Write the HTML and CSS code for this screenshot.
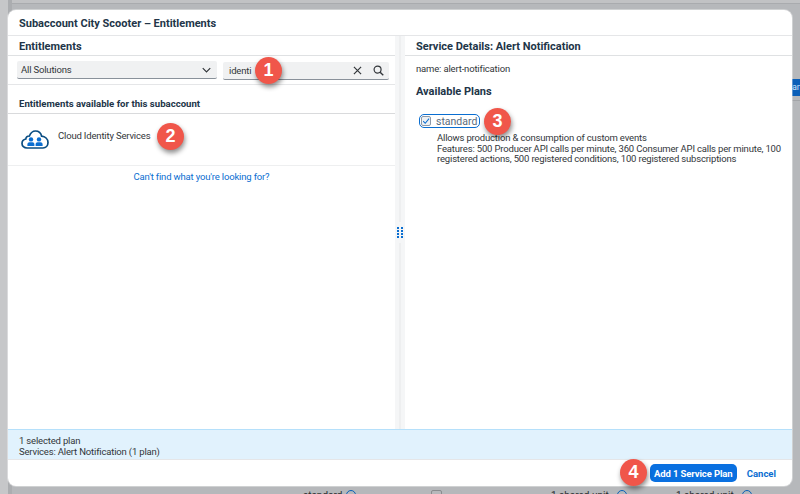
FILE: index.html
```html
<!DOCTYPE html>
<html>
<head>
    <title>Subaccount City Scooter - Entitlements</title>
    <link rel="stylesheet" href="styles.css">
</head>
<body>
    <!-- page behind the dialog -->
    <div class="backdrop-top"></div>
    <div class="backdrop-side"></div>
    <div class="backdrop-line"></div>
    <div class="backdrop-tab">an</div>
    <div class="backdrop-row">
        <span class="row-text row-standard">standard</span>
        <span class="info-dot info-a"></span>
        <span class="row-box"></span>
        <span class="row-text row-unit-a">1 shared unit</span>
        <span class="info-dot info-b"></span>
        <span class="row-text row-unit-b">1 shared unit</span>
        <span class="info-dot info-c"></span>
    </div>

    <div class="dialog">
        <header class="dialog-title">Subaccount City Scooter – Entitlements</header>

        <div class="panes">
            <section class="pane-left">
                <h2 class="pane-heading">Entitlements</h2>
                <div class="filters">
                    <div class="select">
                        <span>All Solutions</span>
                        <svg class="chevron" viewBox="0 0 12 8" width="9" height="6">
                            <path d="M1 1.5 L6 6.5 L11 1.5" fill="none" stroke="#32363a" stroke-width="1.6"/>
                        </svg>
                    </div>
                    <div class="search">
                        <span class="search-value">identi</span>
                        <svg viewBox="0 0 10 10" width="9" height="9">
                            <path d="M1 1 L9 9 M9 1 L1 9" fill="none" stroke="#32363a" stroke-width="1.3"/>
                        </svg>
                        <svg viewBox="0 0 12 12" width="11" height="11">
                            <circle cx="5" cy="5" r="3.8" fill="none" stroke="#32363a" stroke-width="1.3"/>
                            <path d="M7.8 7.8 L11.2 11.2" stroke="#32363a" stroke-width="1.5"/>
                        </svg>
                    </div>
                </div>
                <h3 class="list-heading">Entitlements available for this subaccount</h3>
                <div class="list-item">
                    <svg class="cloud" viewBox="0 0 28 19" width="28" height="19">
                        <path d="M6 18 C3 18 1 16 1 13.4 C1 11 2.6 9.4 4.8 9 C5 7 6.6 5.8 8.4 6 C9.6 3 11.6 1 14.4 1 C17.6 1 20 3.2 20.6 6.2 C24 6.6 27 9 27 12.6 C27 15.8 24.8 18 22 18 Z" fill="#fff" stroke="#0a4d82" stroke-width="1.7"/>
                        <circle cx="10" cy="9.4" r="2.2" fill="#0a6ed1"/>
                        <path d="M6.4 16 V14 C6.4 12.6 8 12.2 10 12.2 C12 12.2 13.4 12.6 13.4 14 V16 Z" fill="#0a6ed1"/>
                        <circle cx="18" cy="9.4" r="2.2" fill="#0a6ed1"/>
                        <path d="M14.6 16 V14 C14.6 12.6 16 12.2 18 12.2 C20 12.2 21.6 12.6 21.6 14 V16 Z" fill="#0a6ed1"/>
                    </svg>
                    <span class="item-name">Cloud Identity Services</span>
                </div>
                <a class="help-link">Can't find what you're looking for?</a>
            </section>

            <div class="splitter">
                <span class="splitter-bar"></span>
                <svg class="grip" viewBox="0 0 6 11" width="6" height="11">
                    <g fill="#0a6ed1">
                        <rect x="0" y="0" width="2" height="2"/><rect x="4" y="0" width="2" height="2"/>
                        <rect x="0" y="3" width="2" height="2"/><rect x="4" y="3" width="2" height="2"/>
                        <rect x="0" y="6" width="2" height="2"/><rect x="4" y="6" width="2" height="2"/>
                        <rect x="0" y="9" width="2" height="2"/><rect x="4" y="9" width="2" height="2"/>
                    </g>
                </svg>
                <span class="splitter-bar"></span>
            </div>

            <section class="pane-right">
                <h2 class="pane-heading">Service Details: Alert Notification</h2>
                <div class="details">
                    <p class="service-name">name: alert-notification</p>
                    <h3 class="plans-heading">Available Plans</h3>
                    <div class="plan">
                        <span class="checkbox">
                            <svg viewBox="0 0 10 10" width="8" height="8">
                                <path d="M1.5 5.2 L4 7.8 L8.8 2" fill="none" stroke="#0a6ed1" stroke-width="1.3"/>
                            </svg>
                        </span>
                        <span class="plan-name">standard</span>
                    </div>
                    <p class="plan-text">Allows production &amp; consumption of custom events<br>Features: 500 Producer API calls per minute, 360 Consumer API calls per minute, 100 registered actions, 500 registered conditions, 100 registered subscriptions</p>
                </div>
            </section>
        </div>

        <div class="summary">
            <div>1 selected plan</div>
            <div>Services: Alert Notification (1 plan)</div>
        </div>

        <footer class="dialog-footer">
            <button class="primary">Add 1 Service Plan</button>
            <button class="cancel">Cancel</button>
        </footer>
    </div>

    <!-- numbered callouts on top of the screenshot -->
    <span class="callout callout-1">1</span>
    <span class="callout callout-2">2</span>
    <span class="callout callout-3">3</span>
    <span class="callout callout-4">4</span>
</body>
</html>
```

FILE: styles.css
```css
* {
    box-sizing: border-box;
}

html, body {
    height: 100%;
}

body {
    margin: 0;
    overflow: hidden;
    position: relative;
    background-color: #b6b8bb;
    font-family: Roboto, "Liberation Sans", Arial, sans-serif;
    font-size: 9.5px;
    letter-spacing: -0.17px;
    color: #32363a;
}

.backdrop-top {
    position: absolute;
    top: 0;
    left: 0;
    width: 100%;
    height: 4px;
    background-color: #c1c2c4;
    border-bottom: 1px solid #a9abae;
}

.backdrop-side {
    position: absolute;
    top: 0;
    left: 0;
    width: 12px;
    height: 100%;
    background-color: #c6c7c9;
    border-right: 4px solid #abadb0;
}

.backdrop-line {
    position: absolute;
    top: 100px;
    right: 0;
    width: 8px;
    height: 1px;
    background-color: #a3a5a8;
}

.backdrop-tab {
    position: absolute;
    top: 79px;
    right: 0;
    width: 8px;
    height: 17px;
    overflow: hidden;
    background-color: #0a5fb8;
    color: #cfe2f7;
    font-size: 9px;
    line-height: 17px;
    white-space: nowrap;
}

.row-text {
    position: absolute;
    top: 490px;
    color: #2c2e30;
    font-size: 10px;
    letter-spacing: 0;
    white-space: nowrap;
}

.row-standard { left: 303px; }
.row-unit-a { left: 551px; }
.row-unit-b { left: 676px; }

.row-box {
    position: absolute;
    top: 490px;
    left: 431px;
    width: 11px;
    height: 11px;
    border: 1px solid #8a8c8f;
    border-radius: 2px;
}

.info-dot {
    position: absolute;
    top: 490px;
    width: 10px;
    height: 10px;
    border: 1px solid #0a5fb8;
    border-radius: 50%;
}

.info-a { left: 346px; }
.info-b { left: 617px; }
.info-c { left: 742px; }

.dialog {
    position: absolute;
    top: 10px;
    left: 8px;
    width: 784px;
    height: 476px;
    display: flex;
    flex-direction: column;
    background-color: #fff;
    border-radius: 8px;
    overflow: hidden;
    box-shadow: 0 0 0 1px rgba(255, 255, 255, 0.35);
}

.dialog-title {
    height: 26px;
    padding: 7px 11px 0;
    color: #223548;
    font-size: 11px;
    font-weight: 700;
    letter-spacing: 0;
    border-bottom: 1px solid #e5e6e8;
}

.panes {
    flex: 1;
    display: flex;
    min-height: 0;
}

.pane-left {
    width: 387px;
}

.pane-right {
    flex: 1;
}

.pane-heading {
    height: 20px;
    margin: 0;
    padding: 4px 11px 0;
    color: #223548;
    font-size: 11px;
    font-weight: 700;
    letter-spacing: 0;
    border-bottom: 1px solid #dfe1e3;
}

.filters {
    display: flex;
    gap: 6px;
    height: 29px;
    padding: 5px 6px 0 9px;
    border-bottom: 1px solid #e5e6e8;
}

.select, .search {
    height: 18px;
    display: flex;
    align-items: center;
    background-color: #f0f1f2;
    border-bottom: 1px solid #89919a;
    border-radius: 2px;
}

.select {
    width: 200px;
    justify-content: space-between;
    padding: 0 6px 0 4px;
}

.search {
    flex: 1;
    gap: 11px;
    margin-top: 1px;
    padding: 0 5px 0 6px;
}

.search-value {
    flex: 1;
}

.list-heading {
    height: 29px;
    margin: 0;
    padding: 13px 11px 0;
    color: #223548;
    font-size: 9.6px;
    font-weight: 700;
    letter-spacing: 0;
    border-bottom: 1px solid #d9dadc;
}

.list-item {
    height: 52px;
    padding: 16px 13px 0;
    display: flex;
    gap: 9px;
    border-bottom: 1px solid #eeeff0;
}

.help-link {
    display: block;
    margin-top: 5px;
    text-align: center;
    color: #0a6ed1;
}

.splitter {
    width: 10px;
    display: flex;
    flex-direction: column;
    align-items: center;
    gap: 5px;
    background-color: #f5f6f7;
}

.splitter-bar {
    flex: 1;
    width: 2px;
    background-color: #eeeff0;
}

.grip {
    flex: none;
}

.details {
    padding: 7px 8px 0 11px;
}

.service-name {
    margin: 0;
}

.plans-heading {
    margin: 11px 0 0;
    color: #223548;
    font-size: 11px;
    font-weight: 700;
    letter-spacing: 0;
}

.plan {
    display: inline-flex;
    align-items: center;
    gap: 5px;
    margin: 16px 0 0 3px;
    height: 14px;
    padding: 0 2px 0 1px;
    border: 1px solid #0a6ed1;
    border-radius: 5px;
}

.checkbox {
    width: 10px;
    height: 10px;
    display: flex;
    align-items: center;
    justify-content: center;
    background-color: #eef1f4;
    border: 1px solid #8d99a8;
    border-radius: 2px;
}

.plan-name {
    font-size: 10.5px;
    letter-spacing: 0;
    color: #5b6b7c;
}

.plan-text {
    margin: 5px 0 0 21px;
    line-height: 10.5px;
}

.summary {
    height: 31px;
    padding: 5px 11px 0;
    background-color: #e1f2fd;
    border-top: 1px solid #b5e0fb;
    border-bottom: 1px solid #e5e6e8;
    line-height: 11px;
}

.dialog-footer {
    height: 26px;
    display: flex;
    align-items: center;
    justify-content: flex-end;
    gap: 10px;
    padding-right: 16px;
}

.primary {
    height: 18px;
    width: 87px;
    padding: 0;
    border: none;
    border-radius: 5px;
    background-color: #0a70e0;
    color: #fff;
    font-family: inherit;
    font-size: 9.5px;
    font-weight: 700;
    letter-spacing: -0.12px;
}

.cancel {
    padding: 0;
    border: none;
    background: none;
    color: #0a6ed1;
    font-family: inherit;
    font-size: 9.5px;
    font-weight: 700;
    letter-spacing: 0;
}

.callout {
    position: absolute;
    width: 27px;
    height: 27px;
    display: flex;
    align-items: center;
    justify-content: center;
    border-radius: 50%;
    background-color: #f0564a;
    color: #fff;
    font-family: "Liberation Sans", Arial, sans-serif;
    font-size: 18px;
    font-weight: 700;
    letter-spacing: 0;
    box-shadow: 1px 3px 5px rgba(0, 0, 0, 0.45);
}

.callout-1 { left: 255px; top: 57px; }
.callout-2 { left: 157px; top: 123px; }
.callout-3 { left: 484px; top: 108px; }
.callout-4 { left: 620px; top: 459px; }
```
